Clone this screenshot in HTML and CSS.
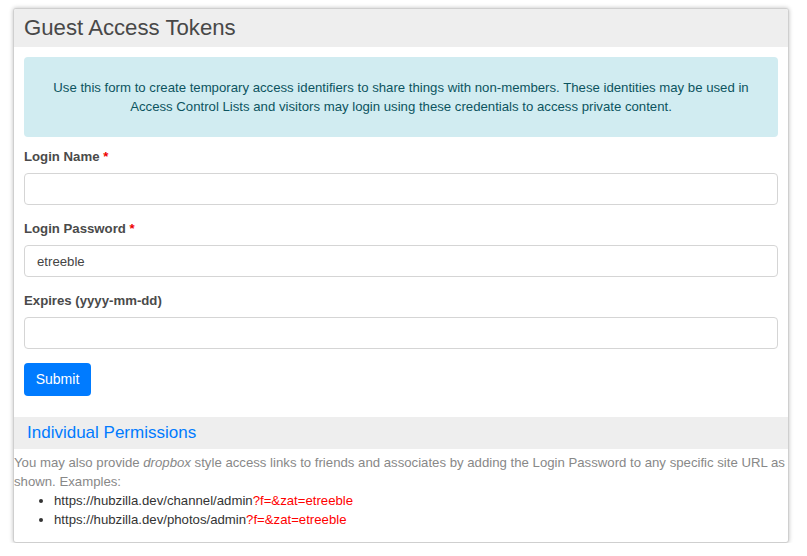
FILE: index.html
```html
<!DOCTYPE html>
<html>
<head>
<meta charset="utf-8">
<link rel="stylesheet" href="styles.css">
</head>
<body>
<div class="card">
  <div class="card-header"><h2>Guest Access Tokens</h2></div>
  <div class="card-body">
    <div class="alert">Use this form to create temporary access identifiers to share things with non-members. These identities may be used in Access Control Lists and visitors may login using these credentials to access private content.</div>
    <div class="field">
      <label>Login Name <span class="req">*</span></label>
      <input class="input" type="text" value="">
    </div>
    <div class="field">
      <label>Login Password <span class="req">*</span></label>
      <input class="input" type="text" value="etreeble">
    </div>
    <div class="field">
      <label>Expires (yyyy-mm-dd)</label>
      <input class="input" type="text" value="">
    </div>
    <button class="btn">Submit</button>
  </div>
  <div class="section-header"><h3>Individual Permissions</h3></div>
  <div class="section-body">
    <div class="desc">You may also provide <em>dropbox</em> style access links to friends and associates by adding the Login Password to any specific site URL as shown. Examples:</div>
    <ul class="examples">
      <li>https://hubzilla.dev/channel/admin<span class="zat">?f=&amp;zat=etreeble</span></li>
      <li>https://hubzilla.dev/photos/admin<span class="zat">?f=&amp;zat=etreeble</span></li>
    </ul>
  </div>
</div>
</body>
</html>
```

FILE: styles.css
```css
html, body {
  margin: 0;
  padding: 0;
  background: #fff;
}
body {
  font-family: "Liberation Sans", Arial, sans-serif;
  font-size: 13.2px;
  color: #333;
}
.card {
  margin: 8px 18px 0 13px;
  border: 1px solid #cfcfcf;
  border-radius: 3px;
  box-shadow: 0 0 4px rgba(0,0,0,0.25);
  background: #fff;
  overflow: hidden;
}
.card-header {
  background: #eee;
  height: 38px;
  display: flex;
  align-items: center;
  padding: 0 10px;
}
.card-header h2 {
  margin: 0;
  font-size: 22.2px;
  font-weight: normal;
  color: #484848;
}
.card-body {
  padding: 10px 10px 21px;
}
.alert {
  background: #d1ecf1;
  color: #0c5460;
  border-radius: 4px;
  text-align: center;
  line-height: 19px;
  padding: 21px 20px 21px;
  margin-bottom: 10px;
}
.field {
  display: flex;
  flex-direction: column;
  margin-bottom: 14px;
}
.field label {
  font-weight: bold;
  color: #4a4a4a;
  line-height: 20px;
  margin-bottom: 6px;
}
.req {
  color: #e00;
}
.input {
  box-sizing: border-box;
  height: 32px;
  border: 1px solid #d5d5d5;
  border-radius: 4px;
  padding: 0 12px;
  font-family: "Liberation Sans", Arial, sans-serif;
  font-size: 13.2px;
  color: #444;
  background: #fff;
  outline: none;
}
.btn {
  display: block;
  background: #007bff;
  color: #fff;
  border: none;
  border-radius: 4px;
  font-family: "Liberation Sans", Arial, sans-serif;
  font-size: 14px;
  height: 33px;
  width: 67px;
  padding: 0 0 1px;
}
.section-header {
  background: #eee;
  height: 32px;
  display: flex;
  align-items: center;
  padding: 0 13px;
}
.section-header h3 {
  margin: 0;
  font-size: 17px;
  font-weight: normal;
  color: #007bff;
}
.section-body {
  padding: 4px 0 13px;
}
.desc {
  color: #888;
  line-height: 19px;
}
.examples {
  margin: 0;
  padding-left: 40px;
  line-height: 19px;
  color: #333;
}
.zat {
  color: #f00;
}
```
